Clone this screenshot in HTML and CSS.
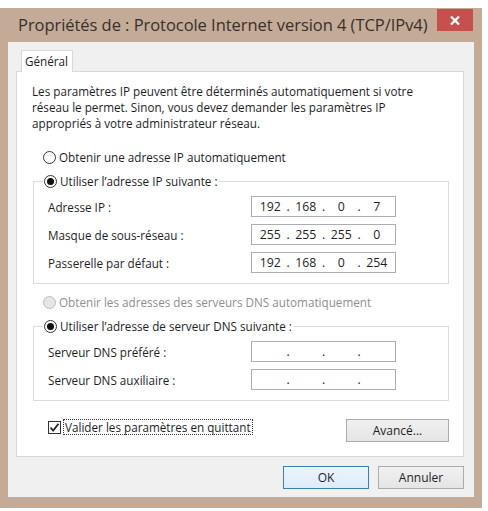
FILE: index.html
```html
<!DOCTYPE html>
<html lang="fr">
<head>
    <meta charset="UTF-8">
    <title>Propriétés de : Protocole Internet version 4 (TCP/IPv4)</title>
    <link rel="stylesheet" href="styles.css">
</head>
<body>
    <div class="window">
        <div class="titlebar">
            <span class="title">Propriétés de : Protocole Internet version 4 (TCP/IPv4)</span>
            <button class="close" aria-label="Fermer">
                <svg width="10" height="9" viewBox="0 0 10 9"><path d="M1 0.5 L9 8.5 M9 0.5 L1 8.5" stroke="#fff" stroke-width="2.2"/></svg>
            </button>
        </div>

        <div class="client">
            <div class="tabs">
                <div class="tab">Général</div>
            </div>

            <div class="panel">
                <p class="intro">Les paramètres IP peuvent être déterminés automatiquement si votre<br>
                réseau le permet. Sinon, vous devez demander les paramètres IP<br>
                appropriés à votre administrateur réseau.</p>

                <label class="radio first"><span class="mark"></span>Obtenir une adresse IP automatiquement</label>

                <fieldset class="group">
                    <legend><label class="radio"><span class="mark on"></span>Utiliser l’adresse IP suivante :</label></legend>
                    <div class="row">
                        <span>Adresse IP :</span>
                        <div class="ip"><span>192</span><i>.</i><span>168</span><i>.</i><span>0</span><i>.</i><span>7</span></div>
                    </div>
                    <div class="row">
                        <span>Masque de sous-réseau :</span>
                        <div class="ip"><span>255</span><i>.</i><span>255</span><i>.</i><span>255</span><i>.</i><span>0</span></div>
                    </div>
                    <div class="row">
                        <span>Passerelle par défaut :</span>
                        <div class="ip"><span>192</span><i>.</i><span>168</span><i>.</i><span>0</span><i>.</i><span>254</span></div>
                    </div>
                </fieldset>

                <label class="radio disabled"><span class="mark"></span>Obtenir les adresses des serveurs DNS automatiquement</label>

                <fieldset class="group">
                    <legend><label class="radio"><span class="mark on"></span>Utiliser l’adresse de serveur DNS suivante :</label></legend>
                    <div class="row">
                        <span>Serveur DNS préféré :</span>
                        <div class="ip"><span></span><i>.</i><span></span><i>.</i><span></span><i>.</i><span></span></div>
                    </div>
                    <div class="row">
                        <span>Serveur DNS auxiliaire :</span>
                        <div class="ip"><span></span><i>.</i><span></span><i>.</i><span></span><i>.</i><span></span></div>
                    </div>
                </fieldset>

                <div class="bottom-row">
                    <label class="check">
                        <span class="box"><svg width="11" height="11" viewBox="0 0 11 11"><path d="M1.5 5.5 L4.2 8.5 L9.5 1.8" fill="none" stroke="#222" stroke-width="1.8"/></svg></span>
                        <span class="focus">Valider les paramètres en quittant</span>
                    </label>
                    <button class="btn advanced">Avancé...</button>
                </div>
            </div>

            <div class="actions">
                <button class="btn default">OK</button>
                <button class="btn">Annuler</button>
            </div>
        </div>
    </div>
</body>
</html>
```

FILE: styles.css
```css
* {
    margin: 0;
    padding: 0;
    box-sizing: border-box;
}

body {
    background: #fff;
    font-family: 'Open Sans', 'Noto Sans', sans-serif;
    font-size: 11.7px;
    color: #1e1e1e;
}

.window {
    margin-top: 8px;
    width: 482px;
    background: #c4ab97;
    padding: 0 8px 11px 8px;
}

.titlebar {
    height: 34px;
    margin-left: -8px;
    margin-right: -8px;
    padding: 0 9px 0 18px;
    display: flex;
    justify-content: space-between;
    align-items: flex-start;
}

.title {
    font-size: 16.5px;
    line-height: 34px;
    color: #38302c;
    letter-spacing: -0.05px;
}

.close {
    margin-top: 1px;
    width: 36px;
    height: 22px;
    border: none;
    background: #c7504e;
    display: flex;
    justify-content: center;
    align-items: center;
}

.client {
    background: #f0f0f0;
    height: 455px;
    padding: 0 10px 0 8px;
}

.tabs {
    padding: 8px 0 0 5px;
    display: flex;
}

.tab {
    position: relative;
    z-index: 1;
    height: 22px;
    margin-bottom: -1px;
    padding: 2px 0 0 3px;
    width: 52px;
    background: #fff;
    border: 1px solid #d9d9d9;
    border-bottom: none;
}

.panel {
    width: 448px;
    background: #fff;
    border: 1px solid #d9d9d9;
    padding: 11px 14px 14px 15px;
}

.intro {
    line-height: 16px;
}

.radio {
    display: flex;
    align-items: center;
    height: 16px;
    line-height: 16px;
}

.radio.first {
    margin: 18px 0 0 11px;
}

.radio.disabled {
    margin: 10px 0 0 11px;
    color: #8e8e8e;
}

.mark {
    width: 13px;
    height: 13px;
    border: 1px solid #333;
    border-radius: 50%;
    background: #fff;
    margin-right: 3px;
    display: flex;
    justify-content: center;
    align-items: center;
}

.mark.on::after {
    content: '';
    width: 7px;
    height: 7px;
    border-radius: 50%;
    background: #111;
}

.radio.disabled .mark {
    border-color: #bcbcbc;
    background: #e6e6e6;
}

.group {
    width: 416px;
    margin: 8px 0 0 1px;
    border: 1px solid #dcdcdc;
    padding: 7px 14px 10px 14px;
}

.group legend {
    margin-left: -5px;
    padding: 0 1px;
}

.row {
    display: flex;
    justify-content: space-between;
    align-items: center;
    height: 21px;
}

.row + .row {
    margin-top: 7px;
}

.ip {
    width: 145px;
    height: 21px;
    margin-right: 38px;
    border: 1px solid #abadb3;
    padding: 0 3px;
    display: flex;
    align-items: center;
    font-size: 12.3px;
}

.ip span {
    flex: 1;
    text-align: center;
}

.ip i {
    font-style: normal;
    width: 5px;
    text-align: center;
}

.bottom-row {
    width: 416px;
    margin: 18px 0 0 1px;
    display: flex;
    justify-content: space-between;
    align-items: flex-start;
}

.check {
    display: flex;
    align-items: center;
    padding-left: 15px;
    height: 16px;
}

.box {
    width: 13px;
    height: 13px;
    border: 1px solid #333;
    background: #fff;
    display: flex;
    justify-content: center;
    align-items: center;
    margin-right: 2px;
}

.focus {
    border: 1px dotted #333;
    line-height: 14px;
    padding: 0 1px;
}

.btn {
    font-family: 'Open Sans', 'Noto Sans', sans-serif;
    font-size: 12px;
    color: #1e1e1e;
    height: 23px;
    border: 1px solid #acacac;
    background: linear-gradient(#f0f0f0, #e5e5e5);
}

.advanced {
    width: 103px;
}

.actions {
    margin-top: 9px;
    display: flex;
    justify-content: flex-end;
    gap: 9px;
}

.actions .btn {
    width: 86px;
}

.btn.default {
    border-color: #3c7fb1;
    background: linear-gradient(#ecf4fc, #dcecfc);
}
```
